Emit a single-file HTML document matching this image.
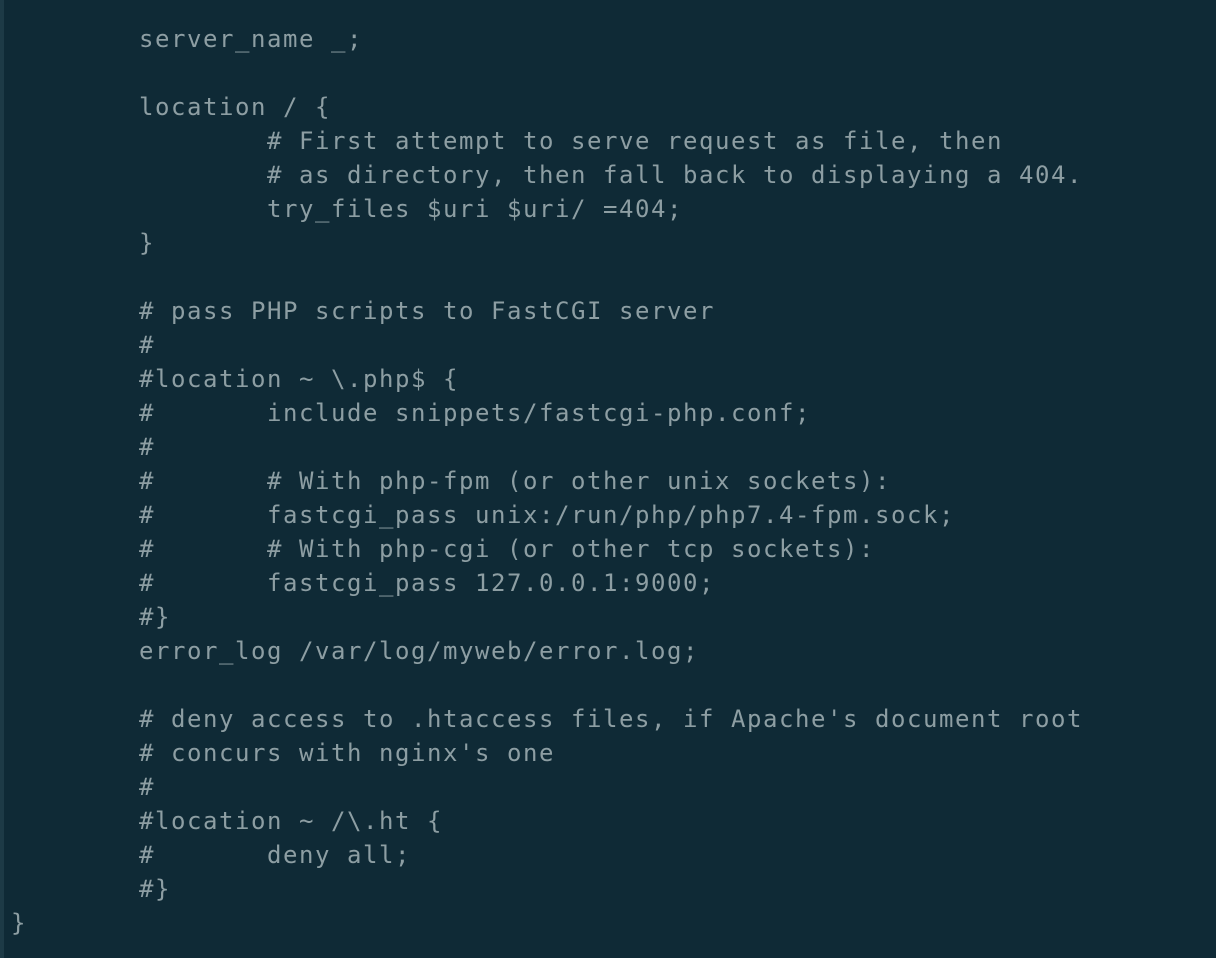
<!DOCTYPE html>
<html><head><meta charset="utf-8"><style>
html,body{margin:0;padding:0;}
body{width:1216px;height:958px;background:#0f2a36;position:relative;overflow:hidden;}
.bar{position:absolute;left:0;top:0;width:4px;height:958px;background:#1d3a46;}
pre{position:absolute;left:11px;top:22px;margin:0;font-family:"DejaVu Sans Mono","Liberation Mono",monospace;font-size:24px;letter-spacing:1.55px;line-height:34px;color:#8d9ea3;tab-size:8;white-space:pre;}
</style></head><body><div class="bar"></div><pre>        server_name _;

        location / {
                # First attempt to serve request as file, then
                # as directory, then fall back to displaying a 404.
                try_files $uri $uri/ =404;
        }

        # pass PHP scripts to FastCGI server
        #
        #location ~ \.php$ {
        #       include snippets/fastcgi-php.conf;
        #
        #       # With php-fpm (or other unix sockets):
        #       fastcgi_pass unix:/run/php/php7.4-fpm.sock;
        #       # With php-cgi (or other tcp sockets):
        #       fastcgi_pass 127.0.0.1:9000;
        #}
        error_log /var/log/myweb/error.log;

        # deny access to .htaccess files, if Apache's document root
        # concurs with nginx's one
        #
        #location ~ /\.ht {
        #       deny all;
        #}
}</pre></body></html>
